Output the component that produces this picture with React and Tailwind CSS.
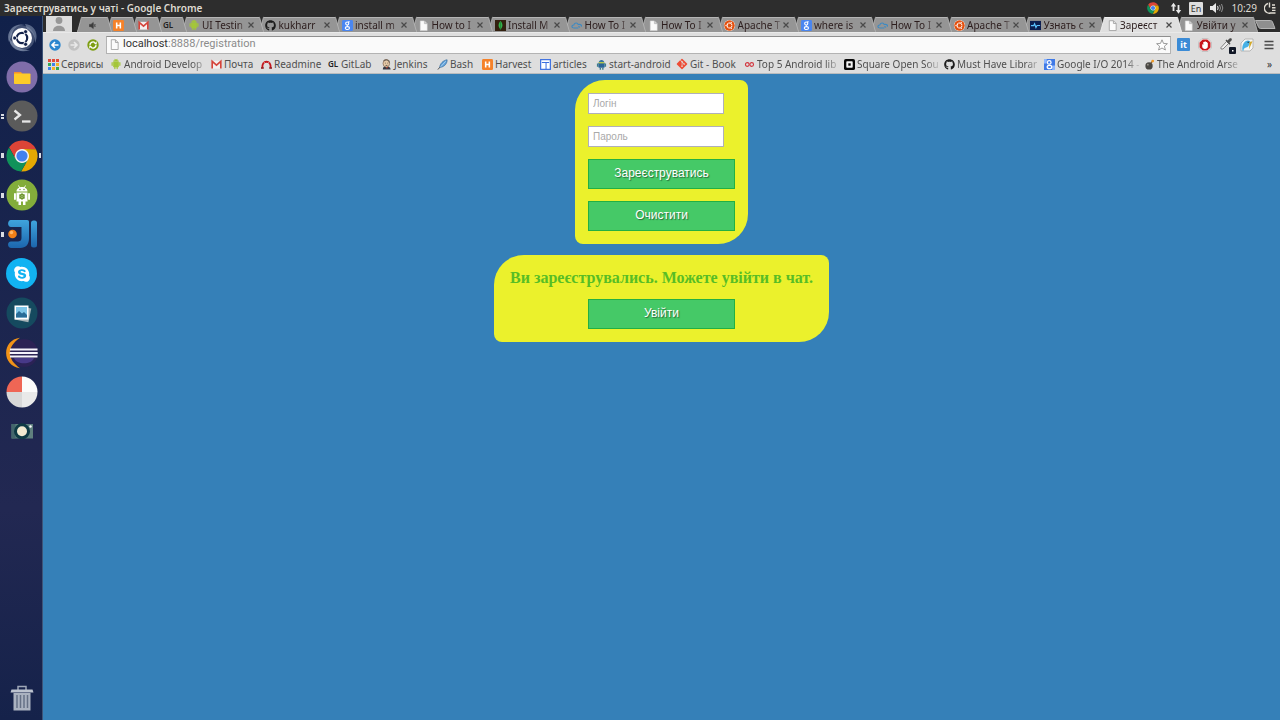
import React from "react";
import { FaGithub, FaUbuntu, FaSkype, FaGitAlt } from "react-icons/fa";
import { AiFillAndroid } from "react-icons/ai";

/* ---------- small icons ---------- */

const Android = () => <AiFillAndroid className="size-3 text-[#a4c639]" />;
const Github = () => <FaGithub className="size-[11px] text-[#1c1c1c]" />;
const Ubuntu = () => <FaUbuntu className="size-[11px] rounded-full bg-white text-[#e2500f]" />;

const Harvest = () => (
  <svg viewBox="0 0 12 12" className="size-[11px]">
    <rect width="12" height="12" rx="1.5" fill="#f5822a" />
    <path d="M4 2.8v6.4M8 2.8v6.4M4 6h4" stroke="#fff" strokeWidth="1.7" fill="none" />
  </svg>
);

const Gmail = () => (
  <svg viewBox="0 0 12 12" className="size-[11px]">
    <path d="M1 2h10v8.500H1z" fill="#f3f0ef" />
    <path d="M1.300 10.300V2.600L6 6.600l4.700-4v7.700" stroke="#d5443a" strokeWidth="1.800" fill="none" />
  </svg>
);

const GitLab = () => <span className="text-[8px] font-semibold leading-3 text-[#222]">GL</span>;

const Google = () => (
  <svg viewBox="0 0 12 12" className="size-[11px]">
    <rect width="12" height="12" rx="1.500" fill="#4a86f0" />
    <circle cx="5.700" cy="3.900" r="1.700" stroke="#fff" strokeWidth="1.200" fill="none" />
    <path d="M6.500 2h2M6.300 5.700c-1 .6-.4 1 .3 1.400" stroke="#fff" strokeWidth="1" fill="none" />
    <ellipse cx="5.900" cy="8.800" rx="2.300" ry="1.600" stroke="#fff" strokeWidth="1.200" fill="none" />
  </svg>
);

const GooglePlain = () => (
  <svg viewBox="0 0 12 12" className="size-[11px]">
    <rect width="12" height="12" fill="#3f79e6" />
    <path d="M0 0h3v5H0zM9 7h3v5H9z" fill="#8db6ff" />
    <circle cx="5.700" cy="3.700" r="2" stroke="#fff" strokeWidth="1.400" fill="none" />
    <ellipse cx="6" cy="8.800" rx="2.500" ry="1.800" stroke="#fff" strokeWidth="1.400" fill="none" />
  </svg>
);

const Page = () => (
  <svg viewBox="0 0 12 12" className="size-[11px]">
    <path d="M2.500 1h4.500l3 3v7.500h-7.500z" fill="#fafafa" stroke="#d8d8d8" strokeWidth=".6" />
    <path d="M7 1v3h3" fill="#ccc" stroke="#aaa" strokeWidth=".6" />
  </svg>
);

const PageOutline = () => (
  <svg viewBox="0 0 12 12" className="size-[11px]">
    <path d="M2.500 .8h4.500l3 3v7.700h-7.500z" fill="#fbfbfb" stroke="#9b9b9b" strokeWidth=".9" />
    <path d="M7 .8v3h3" fill="none" stroke="#9b9b9b" strokeWidth=".9" />
  </svg>
);

const Leaf = () => (
  <svg viewBox="0 0 12 12" className="size-[11px]">
    <rect width="12" height="12" fill="#33200f" />
    <path d="M6 1c3 3 2.600 7 0 9C3.400 8 3 4 6 1z" fill="#35b04a" />
    <path d="M6 2v9" stroke="#1d7a2f" strokeWidth=".7" />
  </svg>
);

const Cloud = () => (
  <svg viewBox="0 0 12 12" className="size-[11px]">
    <path d="M2.800 8.700c-2.600-.3-2.300-3.200.2-3.200C3.700 2.600 7.200 2.600 7.900 5c2.200-.8 3.900.7 3.500 2.200M3 8.700h5M8 7l2 1" stroke="#3b8ac4" strokeWidth="1.200" fill="none" />
  </svg>
);

const Pulse = () => (
  <svg viewBox="0 0 12 12" className="size-[11px]">
    <rect y="1" width="12" height="10" fill="#0c1e50" />
    <path d="M1 6.200h3l1-2 1.500 4L7.700 6H11" stroke="#5cc3ff" strokeWidth="1.300" fill="none" />
  </svg>
);

const Muted = () => (
  <svg viewBox="0 0 12 12" className="size-[9px]">
    <path d="M2 4.500h2L7 2v8L4 7.500H2zM8 4l2 4M10 4L8 8" fill="#3c3c3c" stroke="#3c3c3c" strokeWidth=".8" />
  </svg>
);

const Apps = () => (
  <svg viewBox="0 0 11 11" className="size-[11px]">
    <path d="M0 0h3v3H0zM4 0h3v3H4zM8 0h3v3H8z" fill="#e14b3b" />
    <path d="M0 4h3v3H0zM8 8h3v3H8z" fill="#35a853" />
    <path d="M4 4h3v3H4zM0 8h3v3H0z" fill="#3d83ee" />
    <path d="M8 4h3v3H8zM4 8h3v3H4z" fill="#f2b529" />
  </svg>
);

const Redmine = () => (
  <svg viewBox="0 0 12 12" className="size-[11px]">
    <path d="M1.500 9.500C1.300 5.500 3 3 6 3s4.700 2.500 4.500 6.500" stroke="#c4161c" strokeWidth="2" fill="none" />
    <path d="M3.200 3.200l1 1.500M8.800 3.200l-1 1.500" stroke="#eee" strokeWidth=".6" />
    <path d="M0 9.800h3M9 9.800h3" stroke="#8d1014" strokeWidth="1.500" />
  </svg>
);

const Jenkins = () => (
  <svg viewBox="0 0 12 12" className="size-[11px]">
    <path d="M2 11.500c0-3 2-3.500 4-3.500s4.500.8 4.500 3.500z" fill="#353a45" />
    <path d="M5 8l1.500 3L8 8z" fill="#c6302b" />
    <ellipse cx="5.800" cy="4.700" rx="3.600" ry="4.200" fill="#e8cba8" stroke="#755b47" strokeWidth=".7" />
    <path d="M3 2.200C5 .2 8.700.5 9.300 4" stroke="#6d6257" strokeWidth="1.200" fill="none" />
    <path d="M4.300 4.500h.8M7 4.500h.8M5 7h2" stroke="#333" strokeWidth=".8" />
  </svg>
);

const Feather = () => (
  <svg viewBox="0 0 12 12" className="size-[11px]">
    <path d="M1 11.500l3-3.500" stroke="#444" strokeWidth="1" />
    <path d="M3 9C3 5.500 6.500 1.500 11 .8 11.500 4 8.500 8.500 4 9z" fill="#5e9fd8" stroke="#376b9c" strokeWidth=".7" />
    <path d="M4 8.500l5.500-6" stroke="#d7ebfb" strokeWidth=".7" />
  </svg>
);

const Articles = () => (
  <svg viewBox="0 0 12 12" className="size-[11px]">
    <rect x=".7" y=".7" width="10.600" height="10.600" fill="#fff" stroke="#3c6fe0" strokeWidth="1.300" />
    <path d="M2 3.800h8M6.600 4v7" stroke="#3c6fe0" strokeWidth="1.100" />
  </svg>
);

const Droid = () => (
  <svg viewBox="0 0 12 12" className="size-[11px]">
    <path d="M3 4c0-4 6-4 6 0z" fill="#2d6da3" />
    <rect x="2.500" y="4" width="7" height="5.500" rx="1" fill="#2b6597" />
    <path d="M3 3.200h6v1.600H3z" fill="#b5c94c" />
    <path d="M1 5h1.300v3.500H1zM9.700 5H11v3.500H9.700zM4 9.500h1.500v2.200H4zM6.700 9.500h1.500v2.200H6.700z" fill="#3a7f8c" />
  </svg>
);

const Infinity8 = () => (
  <svg viewBox="0 0 12 12" className="size-[11px]">
    <circle cx="3.600" cy="6" r="2" stroke="#d2353e" strokeWidth="1.200" fill="none" />
    <circle cx="8.400" cy="6" r="2" stroke="#d2353e" strokeWidth="1.200" fill="none" />
  </svg>
);

const Square = () => (
  <svg viewBox="0 0 12 12" className="size-[11px]">
    <rect width="12" height="12" rx="2" fill="#080808" />
    <rect x="2.500" y="2.500" width="7" height="7" rx=".8" fill="#f4f4f4" />
    <rect x="4.700" y="4.700" width="2.600" height="2.600" fill="#080808" />
  </svg>
);

const Bomb = () => (
  <svg viewBox="0 0 12 12" className="size-[11px]">
    <circle cx="5.500" cy="7.500" r="4" fill="#4a4844" />
    <circle cx="4.200" cy="6.200" r="1" fill="#99958c" />
    <path d="M7.500 4.500L9 2.700" stroke="#7c5a33" strokeWidth="1.200" />
    <circle cx="9.500" cy="2.200" r="1.500" fill="#f19a26" />
  </svg>
);

const Chrome = ({ className }) => (
  <svg viewBox="0 0 32 32" className={className}>
    <circle cx="16" cy="16" r="8" fill="#f3f3f3" />
    {[["#dc4437", 0], ["#e4a802", 120], ["#10925a", 240]].map(([fill, angle]) => (
      <path
        key={angle}
        fill={fill}
        transform={`rotate(${angle} 16 16)`}
        d="M16 9H29.850A15.500 15.500 0 0 0 3.100 7.300L9.940 19.500A7 7 0 0 1 16 9Z"
      />
    ))}
    <circle cx="16" cy="16" r="5.600" fill="#4381ee" />
  </svg>
);

/* ---------- launcher ---------- */

const launcher = [
  {
    name: "Dash",
    icon: (
      <svg viewBox="0 0 32 32" className="size-8">
        <path d="M3 20C-1 9 9 0 19 3c-7 0-12 3-13 9z" fill="#7d8ca8" opacity=".75" />
        <path d="M19 2c10 1 14 10 10 19 0-8-3-12-8-14z" fill="#7d8ca8" opacity=".65" />
        <path d="M3 17c1 9 10 15 21 11-8 0-13-2-15-6z" fill="#7d8ca8" opacity=".75" />
        <circle cx="16" cy="16" r="12.500" fill="#9aa7bd" opacity=".35" />
        <circle cx="16" cy="16" r="10" fill="#fff" />
        <circle cx="16" cy="16" r="5.200" stroke="#14224a" strokeWidth="2.200" fill="none" />
        <path d="M16 16L7 16M16 16l5-8.500M16 16l5 8.500" stroke="#fff" strokeWidth="1.200" />
        <circle cx="16" cy="16" r="3.500" fill="#fff" />
        {[[8.7, 16], [19.6, 9.7], [19.6, 22.3]].map(([x, y]) => (
          <circle key={`${x}-${y}`} cx={x} cy={y} r="2" fill="#14224a" stroke="#fff" strokeWidth=".7" />
        ))}
      </svg>
    ),
  },
  {
    name: "Files",
    icon: (
      <svg viewBox="0 0 32 32" className="size-8">
        <circle cx="16" cy="16" r="15.500" fill="#7f6da9" />
        <path d="M8 11h7l1.500 2v8H8z" fill="#f5922c" />
        <rect x="8" y="12.500" width="16.500" height="10.500" rx=".8" fill="#fdcb29" />
      </svg>
    ),
  },
  {
    name: "Terminal",
    marks: 2,
    icon: (
      <svg viewBox="0 0 32 32" className="size-8">
        <circle cx="16" cy="16" r="15.500" fill="#5b5b5b" />
        <path d="M8.500 10.500l5.500 4.500-5.500 4.500" stroke="#e6e6e6" strokeWidth="2.300" fill="none" />
        <path d="M16 21.500h8.500" stroke="#e6e6e6" strokeWidth="2.300" />
      </svg>
    ),
  },
  { name: "Chrome", marks: 1, active: true, icon: <Chrome className="size-8" /> },
  {
    name: "Android Studio",
    marks: 1,
    icon: (
      <svg viewBox="0 0 32 32" className="size-8">
        <circle cx="16" cy="16" r="15.500" fill="#83ad3b" />
        <path d="M10.500 12.500c0-6 11-6 11 0zM10.500 13.500h11v9h-11zM12.500 22h2.500v4h-2.500zM17 22h2.500v4H17z" fill="#fff" />
        <path d="M12.500 6.500l1.500 3M19.500 6.500l-1.500 3" stroke="#fff" strokeWidth=".9" />
        <rect x="8" y="14" width="1.900" height="7" rx="1" fill="#fff" />
        <rect x="22.100" y="14" width="1.900" height="7" rx="1" fill="#fff" />
        <circle cx="14" cy="10.500" r=".7" fill="#6c952c" />
        <circle cx="18" cy="10.500" r=".7" fill="#6c952c" />
        <circle cx="16" cy="17.500" r="2" stroke="#6c952c" strokeWidth="1.400" fill="none" />
        <path d="M16 14v7M13 15.700l6 3.600M19 15.700l-6 3.600" stroke="#6c952c" strokeWidth=".8" />
      </svg>
    ),
  },
  {
    name: "IntelliJ IDEA",
    marks: 1,
    icon: (
      <svg viewBox="0 0 32 32" className="size-8">
        <defs>
          <linearGradient id="ij" x1="0" y1="0" x2="0" y2="1">
            <stop offset="0" stopColor="#3fa4dd" />
            <stop offset="1" stopColor="#1c66ad" />
          </linearGradient>
        </defs>
        <path d="M4.500 2H21c1.500 0 2 .8 2 2v16c0 6.500-3 10-9 10H5.500C1 30 1 23.500 5 23.500h6c3.500 0 4.500-1 4.500-4V9H5C1.500 9 1 3 4.500 2z" fill="url(#ij)" />
        <rect x="25" y="2.500" width="6" height="27" rx="2.500" fill="url(#ij)" />
        <circle cx="6.500" cy="16" r="4.300" fill="#f08018" />
        <circle cx="5.500" cy="14.500" r="1.700" fill="#ffb766" />
      </svg>
    ),
  },
  {
    name: "Skype",
    icon: (
      <span className="grid size-[31px] place-items-center rounded-full bg-[#12b3f2]">
        <FaSkype className="size-[18px] text-white" />
      </span>
    ),
  },
  {
    name: "Photos",
    icon: (
      <svg viewBox="0 0 32 32" className="size-8">
        <circle cx="16" cy="16" r="15.500" fill="#154a5f" />
        <rect x="10" y="10" width="14" height="14" fill="#a4b2b6" transform="rotate(12 17 17)" />
        <rect x="8.500" y="8.500" width="14" height="14" fill="#fff" />
        <rect x="10" y="10" width="11" height="10.500" fill="#7ec6e8" />
        <path d="M10 20.500V17l3-3 3 2.500 2-1.500 3 3v2.500z" fill="#286c97" />
      </svg>
    ),
  },
  {
    name: "Eclipse",
    icon: (
      <svg viewBox="0 0 32 32" className="size-8">
        <path d="M14 .8C-4.500 3-4.500 29 14 31.200 2.500 24 2.500 8 14 .8z" fill="#f29318" />
        <circle cx="18" cy="16" r="14" fill="#2b2255" />
        <path d="M8 21c2 7 18 7 20 0z" fill="#473988" />
        <path d="M4 12.500h27.500M3.700 16h28M4 19.500h27.500" stroke="#f4f2fb" strokeWidth="1.900" />
      </svg>
    ),
  },
  {
    name: "Disk usage",
    icon: (
      <svg viewBox="0 0 32 32" className="size-8">
        <path d="M16 16V.5A15.500 15.500 0 0 0 .5 16z" fill="#ef6655" />
        <path d="M16 16V.5A15.500 15.500 0 0 1 31.500 16z" fill="#fbfbfb" />
        <path d="M16 16v15.500A15.500 15.500 0 0 1 .5 16z" fill="#d8d8d8" />
        <path d="M16 16v15.500A15.500 15.500 0 0 0 31.500 16z" fill="#e9e9e9" />
      </svg>
    ),
  },
  {
    name: "Screenshot",
    icon: (
      <svg viewBox="0 0 32 32" className="size-8">
        <path d="M5.500 9H27v14.500H5.500z" fill="#5f807e" />
        <path d="M5.500 9h4v14.500h-4z" fill="#43666c" />
        <circle cx="16" cy="16.300" r="8" fill="#0e3a45" />
        <circle cx="16" cy="16.300" r="5" fill="#f2ead1" />
        <circle cx="24.500" cy="11.500" r="1.200" fill="#fff" />
      </svg>
    ),
  },
];

function Launcher() {
  return (
    <nav
      aria-label="Launcher"
      className="flex w-[43px] shrink-0 flex-col justify-between bg-linear-to-b from-[#11214a] via-[#222852] via-70% to-[#15224a] shadow-[inset_-1px_0_#3d5478]"
    >
      <ul className="mt-0.5 flex h-[433px] flex-col">
        {launcher.map((app) => (
          <li key={app.name} className="relative flex flex-1 items-center justify-center">
            {app.marks && (
              <span className="absolute left-px flex flex-col gap-px">
                {app.marks === 2 ? (
                  <>
                    <span className="h-0.5 w-[3px] bg-[#d9dce2]" />
                    <span className="h-0.5 w-[3px] bg-[#d9dce2]" />
                  </>
                ) : (
                  <span className="h-[5px] w-[3px] bg-[#d9dce2]" />
                )}
              </span>
            )}
            <button type="button" aria-label={app.name} className="grid size-8 place-items-center">
              {app.icon}
            </button>
            {app.active && <span className="absolute right-0.5 h-[5px] w-0.5 bg-[#d9dce2]" />}
          </li>
        ))}
      </ul>
      <button type="button" aria-label="Trash" className="mb-1.5 grid place-items-center">
        <svg viewBox="0 0 32 32" className="size-8">
          <path d="M12 8V4.500h8V8" stroke="#9fa8b8" strokeWidth="1.500" fill="none" />
          <path d="M5.500 7.500h21l1 3h-23z" fill="#bcc3cf" />
          <path d="M7.500 11h17v17.500h-17z" fill="#aab2c0" />
          <path d="M11 13v13M14.500 13v13M18 13v13M21.500 13v13" stroke="#667186" strokeWidth="1.500" />
        </svg>
      </button>
    </nav>
  );
}

/* ---------- tab strip ---------- */

const pinned = [
  { name: "Sound", icon: <Muted /> },
  { name: "Harvest", icon: <Harvest /> },
  { name: "Gmail", icon: <Gmail /> },
  { name: "GitLab", icon: <GitLab /> },
];

const tabs = [
  { title: "UI Testin", icon: <Android /> },
  { title: "kukharr", icon: <Github /> },
  { title: "install m", icon: <Google /> },
  { title: "How to I", icon: <Page /> },
  { title: "Install M", icon: <Leaf /> },
  { title: "How To I", icon: <Cloud /> },
  { title: "How To I", icon: <Page /> },
  { title: "Apache T", icon: <Ubuntu /> },
  { title: "where is", icon: <Google /> },
  { title: "How To I", icon: <Cloud /> },
  { title: "Apache T", icon: <Ubuntu /> },
  { title: "Узнать с", icon: <Pulse /> },
  { title: "Зареєст", icon: <PageOutline />, active: true },
  { title: "Увійти у", icon: <Page /> },
];

function Edge({ flip, active }) {
  return (
    <svg viewBox="0 0 5 16" className={flip ? "h-4 w-[5px] shrink-0 -scale-x-100" : "h-4 w-[5px] shrink-0"}>
      <path d="M0 16L1 14 4 3C4.300 1.500 4.500 1 5 1V16z" fill={active ? "#dfdfdf" : "#959595"} />
      <path d="M0 16L1 14 4 3C4.300 1.500 4.500 1 5 1" fill="none" stroke={active ? "#f2f2f2" : "#b9b9b9"} strokeWidth=".8" />
    </svg>
  );
}

function TabShape({ active, children }) {
  return (
    <>
      <Edge active={active} />
      <div
        className={
          active
            ? "mt-px flex h-[15px] min-w-0 flex-1 items-center border-t border-[#f2f2f2] bg-[#dfdfdf]"
            : "mt-px flex h-[15px] min-w-0 flex-1 items-center border-t border-[#b5b5b5] bg-[#959595]"
        }
      >
        {children}
      </div>
      <Edge flip active={active} />
    </>
  );
}

function TabStrip() {
  return (
    <div className="flex h-4 bg-[#2c2c2c] pl-[3px]">
      <div className="mr-[5px] grid h-4 w-[26px] shrink-0 place-items-end justify-center bg-[#dcdcdc]">
        <svg viewBox="0 0 16 16" className="size-4">
          <circle cx="8" cy="4.500" r="3.400" fill="#979797" />
          <path d="M2 15c0-7 12-7 12 0z" fill="#979797" />
        </svg>
      </div>
      <div role="tablist" className="flex min-w-0 flex-1">
        {pinned.map((tab, i) => (
          <div key={tab.name} className={i === 0 ? "flex w-[35px] shrink-0" : "-ml-[5px] flex w-[30px] shrink-0"}>
            <TabShape>
              <button
                type="button"
                role="tab"
                aria-label={tab.name}
                className={i === 0 ? "flex h-3.5 w-full items-center pl-1.5" : "flex h-3.5 w-full items-center pl-px"}
              >
                {tab.icon}
              </button>
            </TabShape>
          </div>
        ))}
        {tabs.map((tab, i) => (
          <div key={i} className={tab.active ? "relative z-10 -ml-[5px] flex min-w-0 flex-1" : "-ml-[5px] flex min-w-0 flex-1"}>
            <TabShape active={tab.active}>
              <button type="button" role="tab" aria-selected={!!tab.active} className="flex min-w-0 flex-1 items-center gap-0.5 pl-px">
                <span className="grid size-3 shrink-0 place-items-center">{tab.icon}</span>
                <span className="min-w-0 flex-1 overflow-hidden whitespace-nowrap text-left text-[10px] leading-[14px] text-[#2c1d1d] mask-r-from-80%">
                  {tab.title}
                </span>
              </button>
              <button type="button" aria-label="Close tab" className="mr-1 grid h-3 w-2 shrink-0 place-items-center">
                <svg viewBox="0 0 6 6" className="size-[6px]">
                  <path d="M.5.5l5 5M5.500.5l-5 5" stroke="#4a4a4a" strokeWidth="1.200" />
                </svg>
              </button>
            </TabShape>
          </div>
        ))}
      </div>
      <button type="button" aria-label="New tab" className="mr-1 -ml-1 h-4 w-[22px] shrink-0">
        <svg viewBox="0 0 22 16" className="h-4 w-[22px]">
          <path d="M1.500 4.500h15c1 0 1.500.5 2 1.500l2.500 6.500H6.500c-1 0-1.500-.5-2-1.500z" fill="#8f8f8f" stroke="#b5b5b5" strokeWidth="1" />
        </svg>
      </button>
    </div>
  );
}

/* ---------- toolbar ---------- */

function Toolbar() {
  return (
    <div className="flex h-[23px] items-center border-t border-[#e9e9e9] bg-[#dedede] pt-px pr-1.5 pl-1.5">
      <div className="flex w-[57px] shrink-0 gap-[7px]">
        <button type="button" aria-label="Back">
          <svg viewBox="0 0 12 12" className="size-3">
            <circle cx="6" cy="6" r="5.700" fill="#2a86cf" />
            <path d="M9.500 6H3.500M6 3L3 6l3 3" stroke="#fff" strokeWidth="1.600" fill="none" />
          </svg>
        </button>
        <button type="button" aria-label="Forward">
          <svg viewBox="0 0 12 12" className="size-3">
            <circle cx="6" cy="6" r="5.700" fill="#c2c2c2" />
            <path d="M2.500 6h6M6 3l3 3-3 3" stroke="#e9e9e9" strokeWidth="1.600" fill="none" />
          </svg>
        </button>
        <button type="button" aria-label="Reload">
          <svg viewBox="0 0 12 12" className="size-3">
            <circle cx="6" cy="6" r="5.700" fill="#7d9e12" />
            <path d="M3 6.500A3 3 0 0 1 8 3.800M9 5.500A3 3 0 0 1 4 8.200" stroke="#fff" strokeWidth="1.300" fill="none" />
            <path d="M7 5h2.700V2.300zM5 7H2.300v2.700z" fill="#fff" />
          </svg>
        </button>
      </div>
      <div className="flex h-[18px] min-w-0 flex-1 items-center border border-[#b3b3b3] border-t-[#8f8f8f] bg-[#fafafa] pr-0.5 pl-0.5">
        <PageOutline />
        <div className="relative ml-[3px] flex h-4 min-w-0 flex-1 items-center font-['Roboto',sans-serif] text-[11px]">
          <input
            aria-label="Address"
            defaultValue="localhost:8888/registration"
            className="w-full bg-transparent text-transparent outline-none"
          />
          <span aria-hidden="true" className="pointer-events-none absolute left-0 text-[#8b8b8b]">
            <span className="text-[#333]">localhost</span>:8888/registration
          </span>
        </div>
        <button type="button" aria-label="Bookmark this page">
          <svg viewBox="0 0 12 12" className="size-3">
            <path d="M6 .8l1.500 3.600 3.900.3-3 2.500 1 3.800L6 9l-3.400 2 1-3.800-3-2.500 3.900-.3z" fill="#fff" stroke="#858585" strokeWidth=".8" />
          </svg>
        </button>
      </div>
      <div className="ml-1.5 flex shrink-0 items-center gap-2">
        <button type="button" aria-label="it" className="grid size-[13px] place-items-center rounded-[1px] bg-[#3b8bd6] text-[9px] font-bold leading-[13px] text-white">
          it
        </button>
        <button type="button" aria-label="Ad blocker">
          <svg viewBox="0 0 14 14" className="size-[14px]">
            <path d="M4.200.5h5.600l3.700 3.700v5.600l-3.700 3.700H4.200L.5 9.800V4.200z" fill="#fff" stroke="#999" strokeWidth=".5" />
            <path d="M4.600 1.500h4.800l3.100 3.100v4.800l-3.100 3.100H4.600L1.500 9.400V4.600z" fill="#c8141b" />
            <path d="M4.200 6v2.500C4.200 10 5.500 11 7 11s2.800-1 2.800-2.500V4.800H9V4H8v-.6H6.500V4H5.300v3z" fill="#fff" />
          </svg>
        </button>
        <button type="button" aria-label="Colour picker" className="mt-0.5">
          <svg viewBox="0 0 16 16" className="size-4">
            <path d="M1 9.500l5.500-6 2 2L3 11H1z" fill="#f0f0f0" stroke="#777" strokeWidth=".9" />
            <path d="M5.500 2.500l1-1 1 1L9.500.6c1.500-1.200 3 .3 2 1.900L9.500 4.500l1 1.300-1 1z" fill="#4b4b4b" />
            <rect x="9" y="9" width="7" height="7" rx="1" fill="#101726" />
            <rect x="12" y="12" width="1.500" height="1.500" fill="#fff" />
          </svg>
        </button>
        <button type="button" aria-label="Bird" className="-ml-1">
          <svg viewBox="0 0 14 14" className="size-[14px]">
            <path d="M5 1h8v9l-3 3H1V5z" fill="#f7f7f5" stroke="#aaa" strokeWidth=".8" />
            <path d="M2.500 12.800C1.500 7 4.500 2.500 8 2.500c1.500 0 2.300.8 2.300 2.200C9.500 5.500 9 9 6 9.500c-1.500.3-2.500 1.500-2.500 3.300z" fill="#47b1e6" />
            <path d="M9.500 4l3-.8-3.500 8z" fill="#d3a92b" />
            <circle cx="8.200" cy="4.300" r=".8" fill="#183e55" />
          </svg>
        </button>
        <button type="button" aria-label="Menu" className="ml-0.5">
          <svg viewBox="0 0 10 10" className="size-[10px]">
            <path d="M.5 1.500h9M.5 5h9M.5 8.500h9" stroke="#4a4a4a" strokeWidth="1.700" />
          </svg>
        </button>
      </div>
    </div>
  );
}

const bookmarks = [
  { title: "Сервисы", icon: <Apps />, width: "w-[63px]" },
  { title: "Android Develop", icon: <Android />, width: "w-[100px]", fade: true },
  { title: "Почта", icon: <Gmail />, width: "w-[50px]" },
  { title: "Readmine", icon: <Redmine />, width: "w-[67px]" },
  { title: "GitLab", icon: <GitLab />, width: "w-[53px]" },
  { title: "Jenkins", icon: <Jenkins />, width: "w-[56px]" },
  { title: "Bash", icon: <Feather />, width: "w-[45px]" },
  { title: "Harvest", icon: <Harvest />, width: "w-[58px]" },
  { title: "articles", icon: <Articles />, width: "w-[56px]" },
  { title: "start-android", icon: <Droid />, width: "w-[81px]" },
  { title: "Git - Book", icon: <FaGitAlt className="size-3 text-[#ee4c35]" />, width: "w-[67px]" },
  { title: "Top 5 Android lib", icon: <Infinity8 />, width: "w-[100px]", fade: true },
  { title: "Square Open Sou", icon: <Square />, width: "w-[100px]", fade: true },
  { title: "Must Have Librar", icon: <Github />, width: "w-[100px]", fade: true },
  { title: "Google I/O 2014 -", icon: <GooglePlain />, width: "w-[100px]", fade: true },
  { title: "The Android Arse", icon: <Bomb />, width: "w-[100px]", fade: true },
];

function BookmarksBar() {
  return (
    <div className="flex h-[19px] items-center justify-between border-b border-[#b9bcbe] bg-[#dedede] pr-2 pl-1">
      <ul className="flex min-w-0 overflow-hidden">
        {bookmarks.map((b) => (
          <li key={b.title} className={`${b.width} shrink-0`}>
            <a href="#" className="flex items-center gap-0.5 pr-px">
              <span className="grid size-3 shrink-0 place-items-center">{b.icon}</span>
              <span
                className={
                  b.fade
                    ? "min-w-0 flex-1 overflow-hidden whitespace-nowrap text-[10px] leading-4 text-[#4f4f4f] mask-r-from-80%"
                    : "whitespace-nowrap text-[10px] leading-4 text-[#4f4f4f]"
                }
              >
                {b.title}
              </span>
            </a>
          </li>
        ))}
      </ul>
      <button type="button" aria-label="More bookmarks" className="text-[10px] leading-4 text-[#333]">
        »
      </button>
    </div>
  );
}

/* ---------- system panel ---------- */

function SystemPanel() {
  return (
    <header className="flex h-4 items-center justify-between bg-[#2d2d2d] pr-1 pl-1 text-[#dfdbd2]">
      <h1 className="text-[10px] font-semibold leading-4">Зареєструватись у чаті - Google Chrome</h1>
      <div className="flex items-center gap-[7px]">
        <Chrome className="size-3" />
        <svg viewBox="0 0 12 12" className="ml-1 size-3">
          <path d="M3.500 9V3M8.500 3v7" stroke="#e8e8e8" strokeWidth="1.800" />
          <path d="M.8 4.500L3.500.8l2.700 3.700zM5.800 8l2.700 3.700L11.200 8z" fill="#e8e8e8" />
        </svg>
        <span className="rounded-[1px] bg-[#dedede] px-0.5 text-[9px] leading-[13px] text-[#333]">En</span>
        <svg viewBox="0 0 14 12" className="h-3 w-[14px]">
          <path d="M0 4h2.500L6 1v10L2.500 8H0z" fill="#e8e8e8" />
          <path d="M7.500 4q1.300 2 0 4" stroke="#e0e0e0" strokeWidth="1.100" fill="none" />
          <path d="M9.500 3q2 3 0 6M11.500 2q2.600 4 0 8" stroke="#8f8f8f" strokeWidth="1" fill="none" />
        </svg>
        <time className="text-[10px] leading-4">10:29</time>
        <svg viewBox="0 0 12 12" className="size-3">
          <path d="M4 1.500a4.900 4.900 0 0 0 2.500 9.500H11.500M5.500.5v5M8 3h3M8 5.700h3.500M8 8.400h3.500" stroke="#dfdbd2" strokeWidth="1.400" fill="none" />
        </svg>
      </div>
    </header>
  );
}

/* ---------- page ---------- */

const field =
  "block h-[21px] w-[136px] border border-[#b0b0b8] bg-white px-1 text-[10px] text-black outline-none placeholder:text-[#a9a9a9]";
const action =
  "block h-[30px] w-[147px] border border-[#22b043] bg-[#45c967] pb-0.5 text-[12px] text-white [text-shadow:1px_1px_1px_#2b6b3a]";
const card = "rounded-tl-[30px] rounded-tr-lg rounded-br-[30px] rounded-bl-lg bg-[#ebf12c] py-[13px]";

function RegistrationPage() {
  return (
    <main className="flex flex-1 flex-col items-center gap-[11px] bg-[#3580b8] pt-1.5 font-['Liberation_Sans',Arial,sans-serif]">
      <form className={`${card} flex flex-col gap-3 px-[13px]`} onSubmit={(e) => e.preventDefault()}>
        <input type="text" aria-label="Логін" placeholder="Логін" className={field} />
        <input type="password" aria-label="Пароль" placeholder="Пароль" className={field} />
        <button type="submit" className={action}>Зареєструватись</button>
        <button type="reset" className={action}>Очистити</button>
      </form>
      <section className={`${card} flex flex-col items-center gap-[11px] px-4`}>
        <h2 className="font-['Liberation_Serif','Times_New_Roman',serif] text-[16px] font-bold leading-5 text-[#58bd25]">
          Ви зареєструвались. Можете увійти в чат.
        </h2>
        <button type="button" className={action}>Увійти</button>
      </section>
    </main>
  );
}

export default function App() {
  return (
    <div className="flex min-h-screen flex-col font-['Noto_Sans',sans-serif]">
      <SystemPanel />
      <div className="flex flex-1">
        <Launcher />
        <div className="flex min-w-0 flex-1 flex-col">
          <TabStrip />
          <Toolbar />
          <BookmarksBar />
          <RegistrationPage />
        </div>
      </div>
    </div>
  );
}
